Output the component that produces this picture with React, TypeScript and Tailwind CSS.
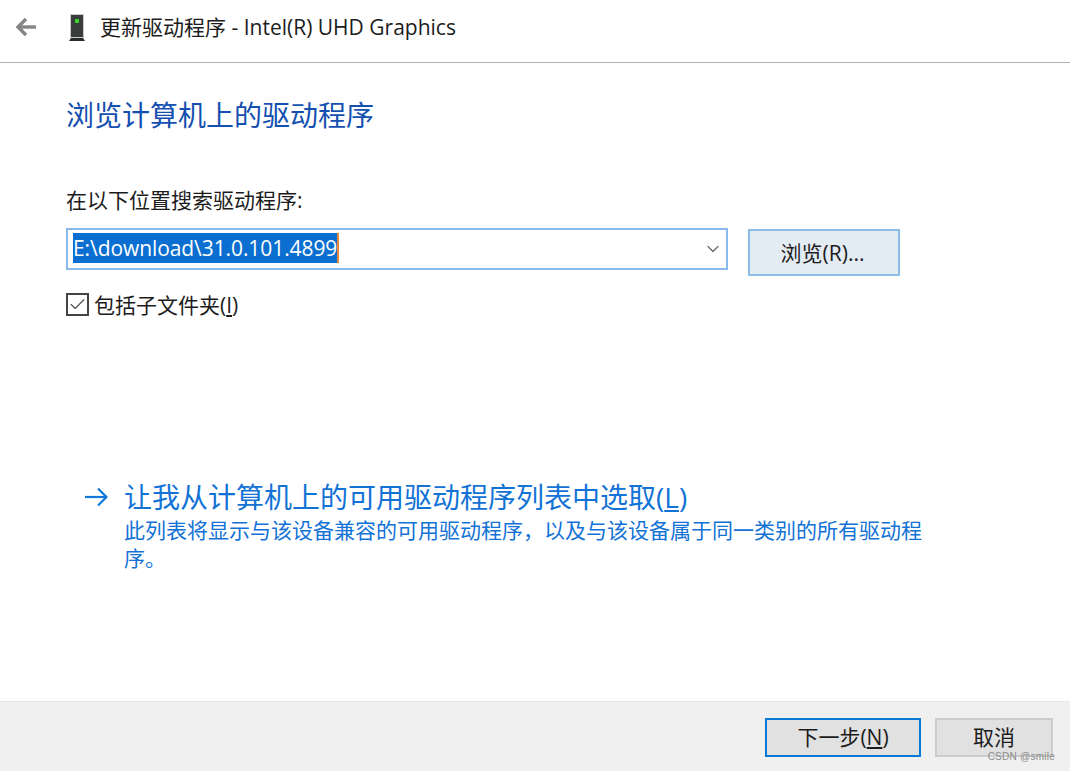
import { Check, ChevronDown } from 'lucide-react';

const font = "font-['Open_Sans','Noto_Sans_CJK_SC',sans-serif]";

const BackArrow = () => (
  <svg width="22" height="20" viewBox="0 0 22 20" fill="none" stroke="#858585" strokeWidth="3.4" className="shrink-0">
    <path d="M21 10H3" />
    <path d="M11 2l-8 8 8 8" />
  </svg>
);

const LinkArrow = () => (
  <svg width="24" height="20" viewBox="0 0 24 20" fill="none" stroke="#0f78d8" strokeWidth="2.2" className="shrink-0">
    <path d="M1 10h21" />
    <path d="M14 1.500l8.500 8.500-8.500 8.500" />
  </svg>
);

const DeviceIcon = () => (
  <svg width="16" height="27" viewBox="0 0 16 27" className="shrink-0">
    <rect x="1.500" y="0.500" width="13" height="23" fill="#3b3d3d" stroke="#c9cccc" />
    <rect x="6" y="5" width="4" height="4" fill="#35d42f" />
    <path d="M2 24h12l2 3H0z" fill="#2a2a2a" />
  </svg>
);

export default function App() {
  return (
    <div className={`${font} relative flex h-[771px] w-[1070px] flex-col overflow-hidden bg-white text-[#1c1c1c]`}>
      <header className="flex h-[63px] shrink-0 items-center border-b border-[#b4b4b4] pb-[8px] pl-[15px]">
        <BackArrow />
        <div className="ml-[32px]">
          <DeviceIcon />
        </div>
        <span className="ml-[15px] text-[21px] leading-[28px]">更新驱动程序 - Intel(R) UHD Graphics</span>
      </header>

      <main className="flex flex-1 flex-col pl-[66px]">
        <h1 className="mt-[32px] text-[28px] leading-[40px] font-normal text-[#1450b0]">浏览计算机上的驱动程序</h1>
        <label className="mt-[50px] text-[21px] leading-[30px]">在以下位置搜索驱动程序:</label>

        <div className="mt-[13px] flex items-start">
          <div className="flex h-[42px] w-[662px] items-center border-2 border-[#86bbec] pl-[5px] pr-[3px]">
            <span className="-translate-y-[1px] border-r-2 border-[#e8893a] bg-[#0a6fd0] text-[21px] leading-[30px] tracking-[-0.08px] text-white">E:\download\31.0.101.4899</span>
            <ChevronDown className="ml-auto h-[20px] w-[20px] text-[#6a6a6a]" strokeWidth={1.5} />
          </div>
          <button className="mt-[1px] ml-[20px] h-[47px] w-[152px] border-2 border-[#8dbde6] bg-[#e3ebf3] pt-[2px] pr-[3px] text-[21px]">浏览(R)...</button>
        </div>

        <div className="mt-[10px] flex items-center">
          <div className="flex h-[23px] w-[23px] items-center justify-center border-2 border-[#444]">
            <Check className="h-[19px] w-[19px] text-[#555]" strokeWidth={1.5} />
          </div>
          <span className="ml-[5px] pt-[1px] text-[21px] leading-[36px]">包括子文件夹(<span className="underline">I</span>)</span>
        </div>

        <div className="mt-[156px] flex items-start text-[#1272d6]">
          <div className="mt-[8px] ml-[18px]">
            <LinkArrow />
          </div>
          <div className="ml-[16px] w-[800px]">
            <div className="text-[28px] leading-[36px]">让我从计算机上的可用驱动程序列表中选取(<span className="underline">L</span>)</div>
            <p className="mt-[1px] text-[21px] leading-[28px]">此列表将显示与该设备兼容的可用驱动程序，以及与该设备属于同一类别的所有驱动程序。</p>
          </div>
        </div>
      </main>

      <footer className="flex h-[70px] shrink-0 items-start justify-end gap-[14px] border-t border-[#e6e6e6] bg-[#f0f0f0] pt-[16px] pr-[17px]">
        <button className="h-[39px] w-[156px] border-2 border-[#0a78d7] bg-[#e1e1e1] text-[21px]">下一步(<span className="underline">N</span>)</button>
        <button className="h-[39px] w-[118px] border-2 border-[#cccccc] bg-[#e1e1e1] text-[21px]">取消</button>
      </footer>

      <span className="absolute right-[15px] bottom-[7px] font-['Liberation_Sans',sans-serif] text-[10px] leading-[14px] tracking-[0.25px] text-[#8a8a8a]">CSDN @smile</span>
    </div>
  );
}
